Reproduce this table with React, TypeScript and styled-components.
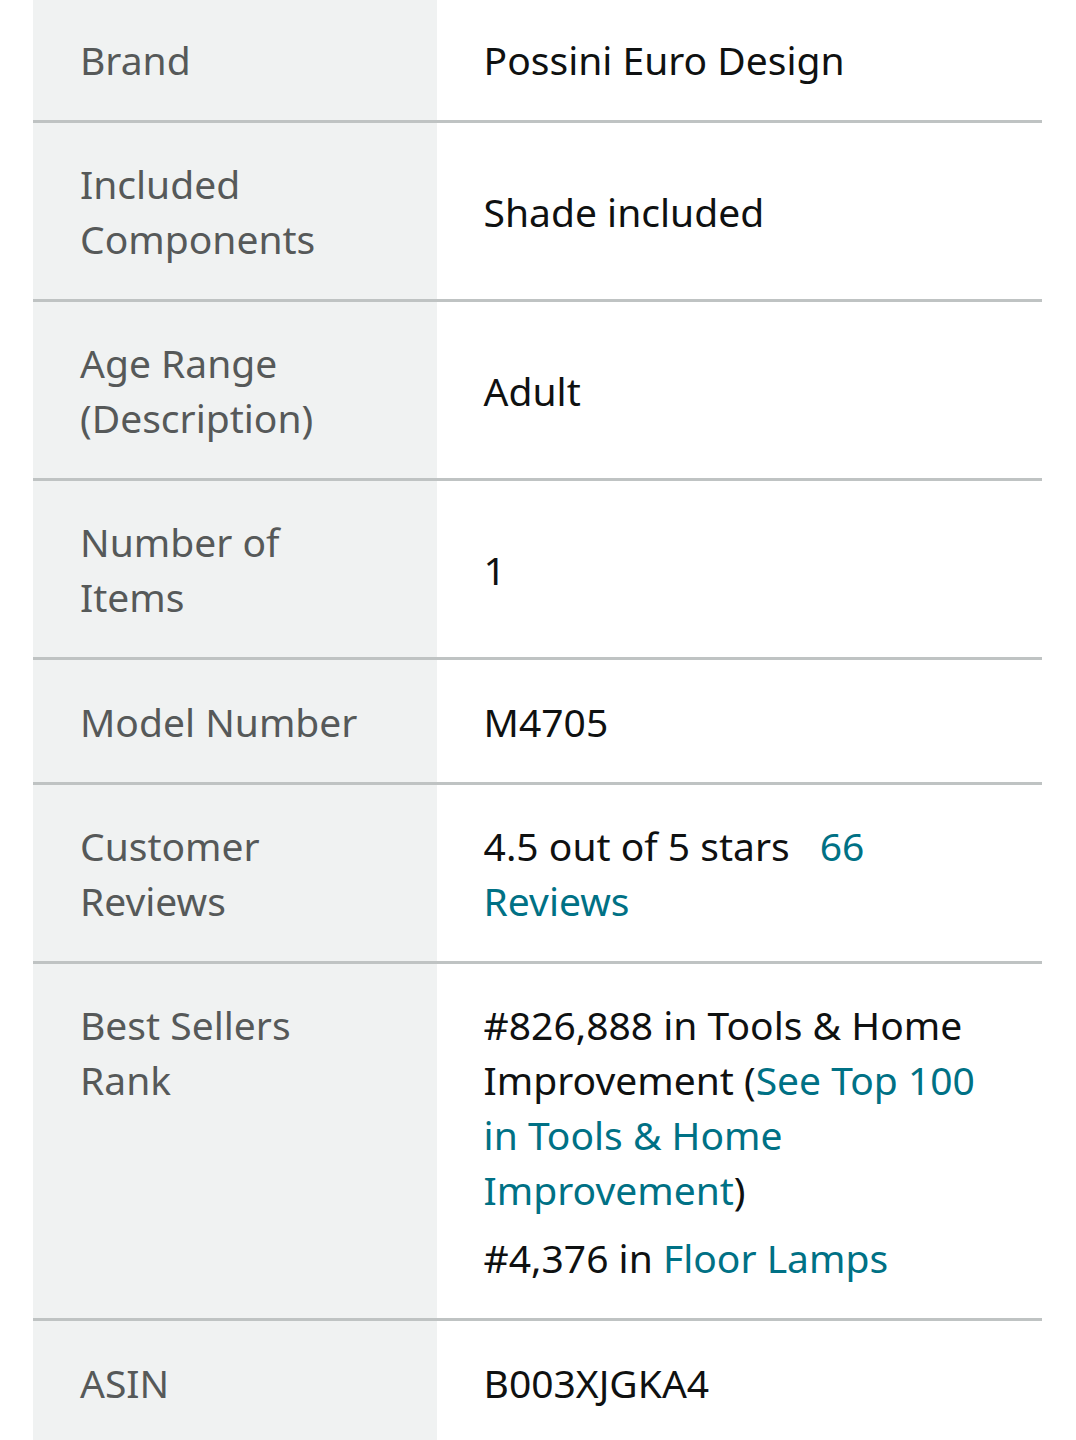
import React from "react";
import styled, { createGlobalStyle } from "styled-components";

const Global = createGlobalStyle`
  html, body { margin: 0; padding: 0; background: #ffffff; }
  body { font-family: "Noto Sans", "Open Sans", sans-serif; }
`;

const Page = styled.div`
  padding: 0 34px 0 33px;
`;

const Table = styled.table`
  width: 100%;
  border-collapse: separate;
  border-spacing: 0;
  font-size: 39px;
  line-height: 55px;
`;

const Row = styled.tr`
  &:first-child > th,
  &:first-child > td {
    padding-top: 32px;
  }
  & + & {
    height: 125px;
  }
  & + & > th,
  & + & > td {
    border-top: 3px solid #bfc3c3;
  }
`;

const Label = styled.th<{ $top?: boolean }>`
  width: 40%;
  background: #f0f2f2;
  color: #565959;
  font-weight: 400;
  text-align: left;
  vertical-align: ${(p) => (p.$top ? "top" : "middle")};
  padding: 33px 70px 33px 47px;
`;

const Value = styled.td`
  color: #0f1111;
  vertical-align: middle;
  padding: 33px 40px 33px 47px;
`;

const Link = styled.a`
  color: #007185;
  text-decoration: none;
`;

const Stars = styled.span`
  margin-right: 30px;
`;

const RankList = styled.ul`
  list-style: none;
  margin: 0;
  padding: 0;
`;

const RankItem = styled.li`
  & + & { margin-top: 13px; }
`;

const rows: { label: string; value: React.ReactNode }[] = [
  { label: "Brand", value: "Possini Euro Design" },
  { label: "Included Components", value: "Shade included" },
  { label: "Age Range (Description)", value: "Adult" },
  { label: "Number of Items", value: "1" },
  { label: "Model Number", value: "M4705" },
  {
    label: "Customer Reviews",
    value: (
      <>
        <Stars>4.5 out of 5 stars</Stars>
        <Link href="#">66 Reviews</Link>
      </>
    ),
  },
];

export default function App() {
  return (
    <>
      <Global />
      <Page>
        <Table>
          <tbody>
            {rows.map((r) => (
              <Row key={r.label}>
                <Label>{r.label}</Label>
                <Value>{r.value}</Value>
              </Row>
            ))}
            <Row>
              <Label $top>Best Sellers Rank</Label>
              <Value>
                <RankList>
                  <RankItem>
                    #826,888 in Tools &amp; Home Improvement (
                    <Link href="#">See Top 100 in Tools &amp; Home Improvement</Link>)
                  </RankItem>
                  <RankItem>
                    #4,376 in <Link href="#">Floor Lamps</Link>
                  </RankItem>
                </RankList>
              </Value>
            </Row>
            <Row>
              <Label>ASIN</Label>
              <Value>B003XJGKA4</Value>
            </Row>
          </tbody>
        </Table>
      </Page>
    </>
  );
}
